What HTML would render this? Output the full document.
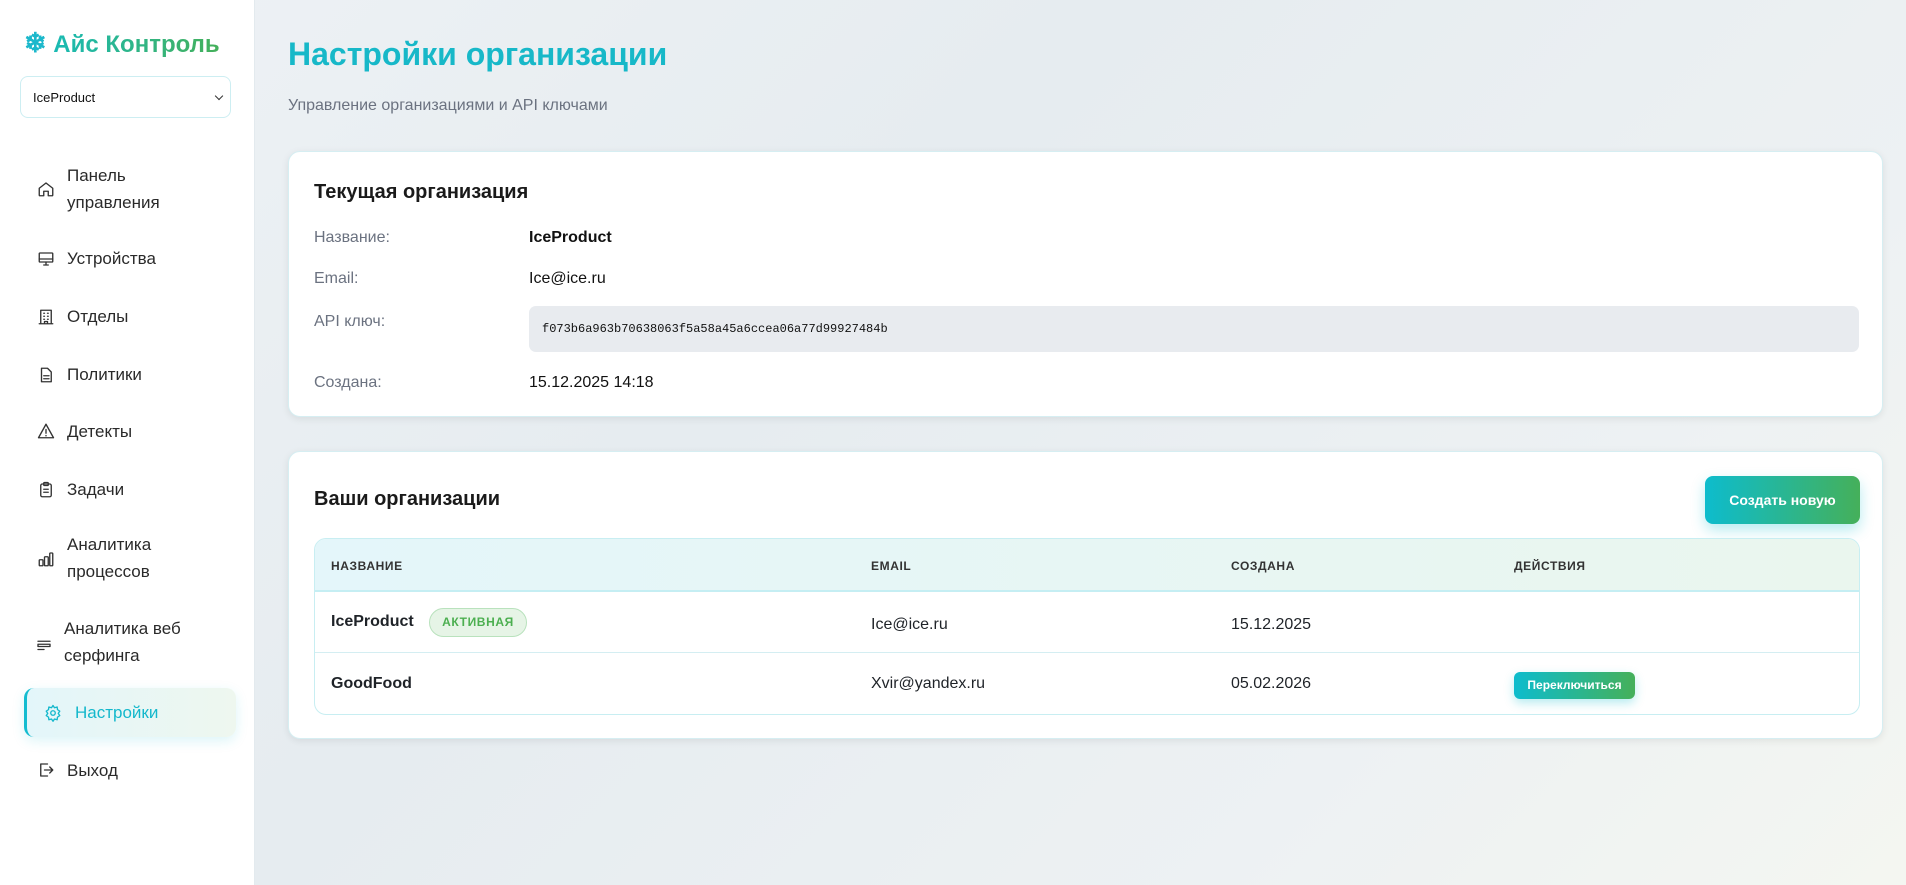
<!DOCTYPE html>
<html><head><meta charset="utf-8"><style>
*{box-sizing:border-box;margin:0;padding:0}
body{width:1906px;height:885px;overflow:hidden;font-family:"Liberation Sans",sans-serif;color:#1f2328;background:linear-gradient(135deg,#eef2f5 0%,#e6ecf0 40%,#edf1f3 75%,#f4f6f1 100%);position:relative}
.sb{position:absolute;left:0;top:0;width:255px;height:885px;background:#fff;border-right:1px solid #e3eaee}
.logo{position:absolute;left:24px;top:28px;font-size:24px;font-weight:bold;background:linear-gradient(90deg,#12bcc4,#45b05a);-webkit-background-clip:text;color:transparent;white-space:nowrap}
.logo span{color:#1cb8cc;-webkit-text-fill-color:#1cb8cc;font-size:27px}
.sel{position:absolute;left:20px;top:76px;width:211px;height:42px;border:1px solid #cdeef2;border-radius:8px;font-size:13px;padding:13px 12px;color:#111}
.sel:after{content:"";position:absolute;right:8px;top:16px;width:5px;height:5px;border-right:1.5px solid #333;border-bottom:1.5px solid #333;transform:rotate(45deg)}
.nav{position:absolute;left:0;width:255px;font-size:17px;color:#2a2a2a;line-height:27px}
.nav svg{position:absolute;left:37px;width:18px;height:18px;fill:none;stroke:#333;stroke-width:1.8;stroke-linecap:round;stroke-linejoin:round}
.nav .t{position:absolute;left:67px}
.act{position:absolute;left:24px;top:688px;width:212px;height:49px;border-radius:10px;border-left:3px solid #14bcd0;background:linear-gradient(90deg,#e3f6fa,#eef7ef);box-shadow:0 4px 12px rgba(20,188,208,.15)}
.h1{position:absolute;left:288px;top:36px;font-size:32px;font-weight:bold;color:#17b8c8}
.sub{position:absolute;left:288px;top:97px;font-size:16px;color:#6b7280}
.card{position:absolute;left:288px;width:1595px;background:#fff;border:1px solid #d6eef2;border-radius:12px;box-shadow:0 2px 8px rgba(0,0,0,.08)}
.h2{position:absolute;font-size:20px;font-weight:bold;color:#1a1a1a}
.lb{position:absolute;left:25px;font-size:16px;color:#6b7280}
.vl{position:absolute;left:240px;font-size:16px;color:#111}
.key{position:absolute;left:240px;top:154px;width:1330px;height:46px;background:#e8ebef;border-radius:7px;font-family:"Liberation Mono",monospace;font-size:12px;padding:16px 13px;color:#111}
.btn{position:absolute;color:#fff;font-weight:bold;background:linear-gradient(90deg,#0dbccd,#45b05a);border-radius:8px;text-align:center}
.tbl{position:absolute;left:25px;top:86px;width:1546px;height:177px;border:1px solid #c8eef2;border-radius:12px;overflow:hidden}
.th{position:absolute;left:0;top:0;width:100%;height:53px;background:linear-gradient(90deg,#e4f6fa,#eaf6ee);border-bottom:2px solid #c5eef3}
.th div{position:absolute;top:20px;font-size:12px;font-weight:bold;letter-spacing:.6px;color:#333}
.r{position:absolute;left:0;width:100%;height:61px}
.r div{position:absolute;font-size:16px}
</style></head><body>
<div class="sb">
<div class="logo"><span>❄</span> Айс Контроль</div>
<div class="sel">IceProduct</div>
<div class="nav" style="top:162px"><svg style="top:18px" viewBox="0 0 24 24"><path d="M3 11l9-7 9 7v9a1 1 0 0 1-1 1h-5v-6H9v6H4a1 1 0 0 1-1-1z"/></svg><div class="t">Панель<br>управления</div></div>
<div class="nav" style="top:245px"><svg style="top:5px" viewBox="0 0 24 24"><rect x="3" y="4" width="18" height="12" rx="1"/><path d="M3 12h18M9 20h6M12 16v4"/></svg><div class="t">Устройства</div></div>
<div class="nav" style="top:303px"><svg style="top:5px" viewBox="0 0 24 24"><path d="M5 21V3h14v18M3 21h18M9 7h1M14 7h1M9 11h1M14 11h1M9 15h1M14 15h1M10 21v-3h4v3"/></svg><div class="t">Отделы</div></div>
<div class="nav" style="top:361px"><svg style="top:5px" viewBox="0 0 24 24"><path d="M6 3h8l5 5v13H6z"/><path d="M9 13h7M9 17h7"/></svg><div class="t">Политики</div></div>
<div class="nav" style="top:418px"><svg style="top:4px" viewBox="0 0 24 24"><path d="M12 3l10 18H2z"/><path d="M12 10v5M12 18v.5"/></svg><div class="t">Детекты</div></div>
<div class="nav" style="top:476px"><svg style="top:5px" viewBox="0 0 24 24"><rect x="5" y="4" width="14" height="17" rx="2"/><rect x="9" y="2" width="6" height="4" rx="1"/><path d="M9 11h6M9 15h6"/></svg><div class="t">Задачи</div></div>
<div class="nav" style="top:531px"><svg style="top:19px" viewBox="0 0 24 24"><rect x="3" y="13" width="5" height="8" rx="1"/><rect x="10" y="9" width="5" height="12" rx="1"/><rect x="17" y="4" width="4" height="17" rx="1"/></svg><div class="t">Аналитика<br>процессов</div></div>
<div class="nav" style="top:615px"><svg style="top:21px;left:35px" viewBox="0 0 24 24"><path d="M4 7h16M4 11h16v3H4zM4 18h8"/></svg><div class="t" style="left:64px">Аналитика веб<br>серфинга</div></div>
<div class="act"></div>
<div class="nav" style="top:699px;color:#14b8cc"><svg style="top:5px;left:44px;stroke:#14b8cc" viewBox="0 0 24 24"><circle cx="12" cy="12" r="3"/><path d="M12 2l2 3 3.5-1 .5 3.5 3 2-2 3 2 3-3 2-.5 3.5-3.5-1-2 3-2-3-3.5 1-.5-3.5-3-2 2-3-2-3 3-2L6.5 4 10 5z"/></svg><div class="t" style="left:75px">Настройки</div></div>
<div class="nav" style="top:757px"><svg style="top:4px" viewBox="0 0 24 24"><path d="M14 4H5v16h9M10 12h11M17 8l4 4-4 4"/></svg><div class="t">Выход</div></div>
</div>

<div class="h1">Настройки организации</div>
<div class="sub">Управление организациями и API ключами</div>

<div class="card" style="top:151px;height:266px">
<div class="h2" style="left:25px;top:29px">Текущая организация</div>
<div class="lb" style="top:77px">Название:</div><div class="vl" style="top:77px;font-weight:bold">IceProduct</div>
<div class="lb" style="top:118px">Email:</div><div class="vl" style="top:118px">Ice@ice.ru</div>
<div class="lb" style="top:161px">API ключ:</div><div class="key">f073b6a963b70638063f5a58a45a6ccea06a77d99927484b</div>
<div class="lb" style="top:222px">Создана:</div><div class="vl" style="top:222px">15.12.2025 14:18</div>
</div>

<div class="card" style="top:451px;height:288px">
<div class="h2" style="left:25px;top:36px">Ваши организации</div>
<div class="btn" style="left:1416px;top:24px;width:155px;height:48px;line-height:48px;font-size:14px;box-shadow:0 6px 14px rgba(13,188,205,.3)">Создать новую</div>
<div class="tbl">
<div class="th"><div style="left:16px">НАЗВАНИЕ</div><div style="left:556px">EMAIL</div><div style="left:916px">СОЗДАНА</div><div style="left:1199px">ДЕЙСТВИЯ</div></div>
<div class="r" style="top:53px;border-bottom:1px solid #d4eef2">
<div style="left:16px;top:21px;font-weight:bold">IceProduct</div>
<div style="left:114px;top:16px;width:98px;height:29px;border:1px solid #b9e2bd;background:#e6f4e6;border-radius:15px;color:#4caf50;font-size:12px;font-weight:bold;letter-spacing:.6px;text-align:center;line-height:27px">АКТИВНАЯ</div>
<div style="left:556px;top:24px">Ice@ice.ru</div>
<div style="left:916px;top:24px">15.12.2025</div></div>
<div class="r" style="top:115px">
<div style="left:16px;top:21px;font-weight:bold">GoodFood</div>
<div style="left:556px;top:21px">Xvir@yandex.ru</div>
<div style="left:916px;top:21px">05.02.2026</div>
<div class="btn" style="left:1199px;top:18px;width:121px;height:27px;line-height:27px;font-size:12px;border-radius:6px;box-shadow:0 4px 10px rgba(13,188,205,.3)">Переключиться</div></div>
</div>
</div>
</body></html>
